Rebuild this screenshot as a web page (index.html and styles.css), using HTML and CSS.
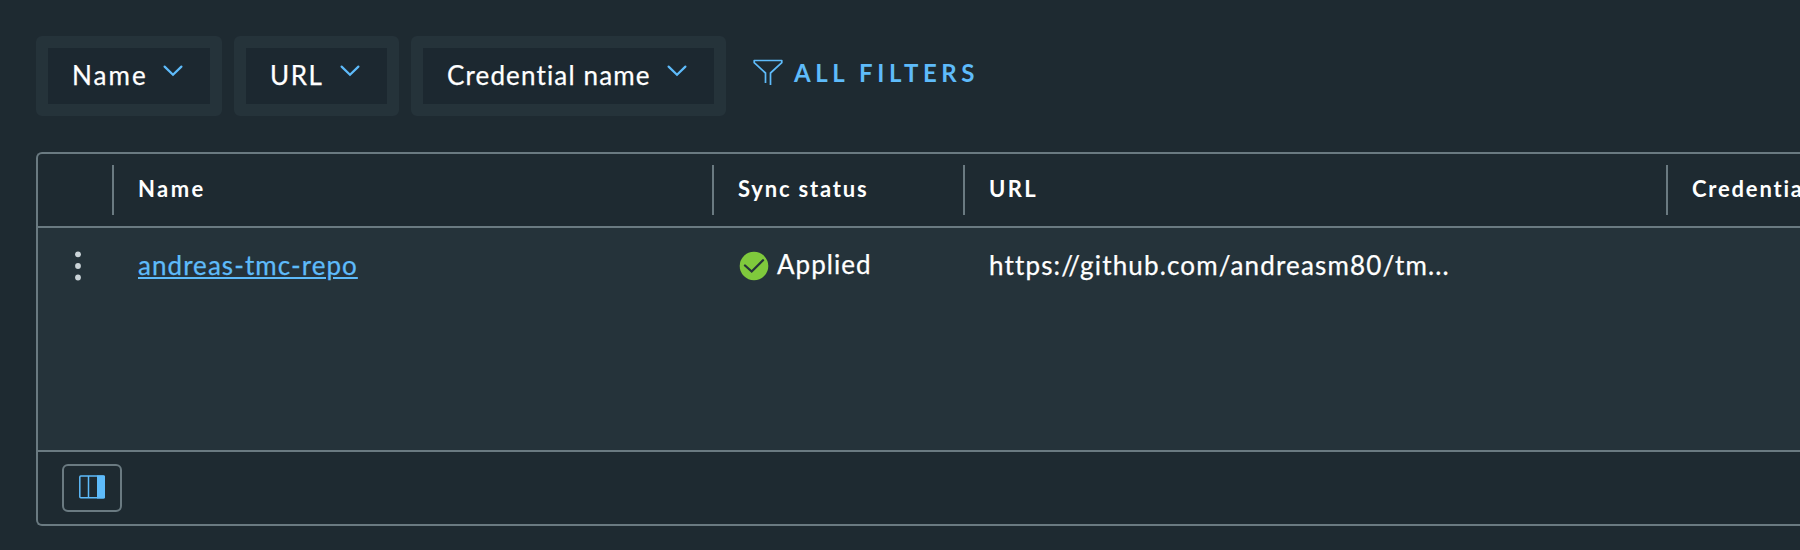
FILE: index.html
```html
<!DOCTYPE html>
<html lang="en">
<head>
<meta charset="utf-8">
<title>Repositories</title>
<link rel="stylesheet" href="styles.css">
</head>
<body>
<main class="page">
  <div class="filters">
    <button class="filter filter-name"><span class="label">Name</span><svg class="chevron" viewBox="0 0 20 12"><path d="M1.600 1.600 10 9.800l8.400-8.200"/></svg></button>
    <button class="filter filter-url"><span class="label">URL</span><svg class="chevron" viewBox="0 0 20 12"><path d="M1.600 1.600 10 9.800l8.400-8.200"/></svg></button>
    <button class="filter filter-credential"><span class="label">Credential name</span><svg class="chevron" viewBox="0 0 20 12"><path d="M1.600 1.600 10 9.800l8.400-8.200"/></svg></button>
    <button class="all-filters">
      <svg class="funnel" viewBox="0 0 30 28"><path d="M12.500 24V14L1.200 3.700V1.500h27.600v2.200L17.500 14v12"/></svg>
      <span class="all-label">ALL FILTERS</span>
    </button>
  </div>
  <section class="grid">
    <div class="row head">
      <div class="cell"></div>
      <div class="cell"><span class="h-name">Name</span></div>
      <div class="cell"><span class="h-sync">Sync status</span></div>
      <div class="cell"><span class="h-url">URL</span></div>
      <div class="cell last"><span class="h-cred">Credential</span></div>
    </div>
    <div class="row body">
      <div class="cell menu"><svg class="dots" viewBox="0 0 6 30"><circle cx="3" cy="3.300" r="2.900"/><circle cx="3" cy="15" r="2.900"/><circle cx="3" cy="26.500" r="2.900"/></svg></div>
      <div class="cell"><a class="repo" href="#">andreas-tmc-repo</a></div>
      <div class="cell status"><svg class="check" viewBox="0 0 30 30"><circle cx="15" cy="15" r="14.300"/><path d="M6 14.500l6.700 6L24 9.300"/></svg><span class="applied">Applied</span></div>
      <div class="cell"><span class="url">https://github.com/andreasm80/tm...</span></div>
      <div class="cell"></div>
    </div>
    <div class="foot">
      <button class="columns"><svg class="columns-icon" viewBox="0 0 26 24"><rect class="frame" x=".8" y="1" width="24.400" height="21.800" rx="1"/><path class="frame" d="M9.500 1v22"/><path class="fill" d="M18 .5h7a1 1 0 0 1 1 1v21a1 1 0 0 1-1 1h-7z"/></svg></button>
    </div>
  </section>
</main>
</body>
</html>
```
FILE: styles.css
```css
* { box-sizing: border-box; }
body {
  margin: 0;
  height: 550px;
  overflow: hidden;
  background: #1e2a31;
  color: #fff;
  font-family: Lato, "Open Sans", sans-serif;
  font-size: 26px;
  line-height: 32px;
}
button { margin: 0; font: inherit; color: inherit; background: none; }
svg { display: block; flex: none; fill: none; }
span, a { white-space: nowrap; }
.page { padding: 36px 0 0 36px; }
.filters { display: flex; gap: 12px; height: 80px; }
.filter {
  display: flex;
  justify-content: space-between;
  padding: 11px 27px 0 24px;
  border: 12px solid #25333a;
  border-radius: 6px;
  background: #1c2830;
  background-clip: padding-box;
}
.filter-name { width: 186px; letter-spacing: 2.1px; }
.filter-url { width: 165px; letter-spacing: 1.6px; }
.filter-credential { width: 315px; letter-spacing: 1.15px; }
.label, .repo, .applied, .url { -webkit-text-stroke: .25px currentColor; }
.chevron { width: 20px; height: 12px; margin-top: 6px; stroke: #5ebbfa; stroke-width: 2.200; stroke-linecap: round; }
.all-filters { display: flex; border: 0; padding: 22px 0 0; margin-left: 15px; color: #5ebbfa; align-items: flex-start; }
.funnel { width: 30px; height: 28px; margin: 1px 11px 0 0; stroke: #5ebbfa; stroke-width: 1.700; stroke-linejoin: round; }
.all-label { font-size: 24px; line-height: 30px; font-weight: 700; letter-spacing: 4.6px; }
.grid { margin-top: 36px; height: 374px; border: 2px solid #6a7a81; border-right: 0; border-radius: 6px 0 0 6px; display: flex; flex-direction: column; overflow: hidden; }
.row { display: grid; grid-template-columns: 76px 600px 251px 703px minmax(0, 1fr); }
.cell { padding-left: 24px; }
.head { height: 74px; padding-top: 11px; border-bottom: 2px solid #6a7a81; font-size: 22px; font-weight: 700; line-height: 28px; }
.head .cell { height: 50px; padding-top: 10px; border-left: 2px solid #6a7a81; margin-left: -2px; }
.head .cell:first-child { border-color: transparent; }
.last { overflow: hidden; }
.h-name { letter-spacing: 2.4px; }
.h-sync { letter-spacing: 1.8px; }
.h-url { letter-spacing: 2.4px; }
.h-cred { letter-spacing: 1.8px; }
.body { flex: 1; background: #25333a; padding-top: 21px; }
.body .menu { padding-left: 37px; }
.dots { width: 6px; height: 30px; margin-top: 2px; fill: #cbd4d8; }
.repo { color: #5ebbfa; letter-spacing: 1.05px; text-decoration-thickness: 2px; text-underline-offset: 2px; }
.status { display: flex; }
.check { width: 30px; height: 30px; margin: 2px 8px 0 1px; }
.check circle { fill: #7fc93c; }
.check path { stroke: #25333a; stroke-width: 2.300; stroke-linecap: round; }
.applied { letter-spacing: 1.05px; margin-top: -1px; }
.url { letter-spacing: 1.15px; }
.foot { height: 74px; border-top: 2px solid #6a7a81; padding: 12px 0 0 24px; }
.columns { display: flex; width: 60px; height: 48px; padding: 9px 0 0 15px; border: 2px solid #6a7a81; border-radius: 6px; }
.columns-icon { width: 26px; height: 24px; }
.frame { stroke: #5ebbfa; stroke-width: 1.500; }
.fill { fill: #5ebbfa; }
```
